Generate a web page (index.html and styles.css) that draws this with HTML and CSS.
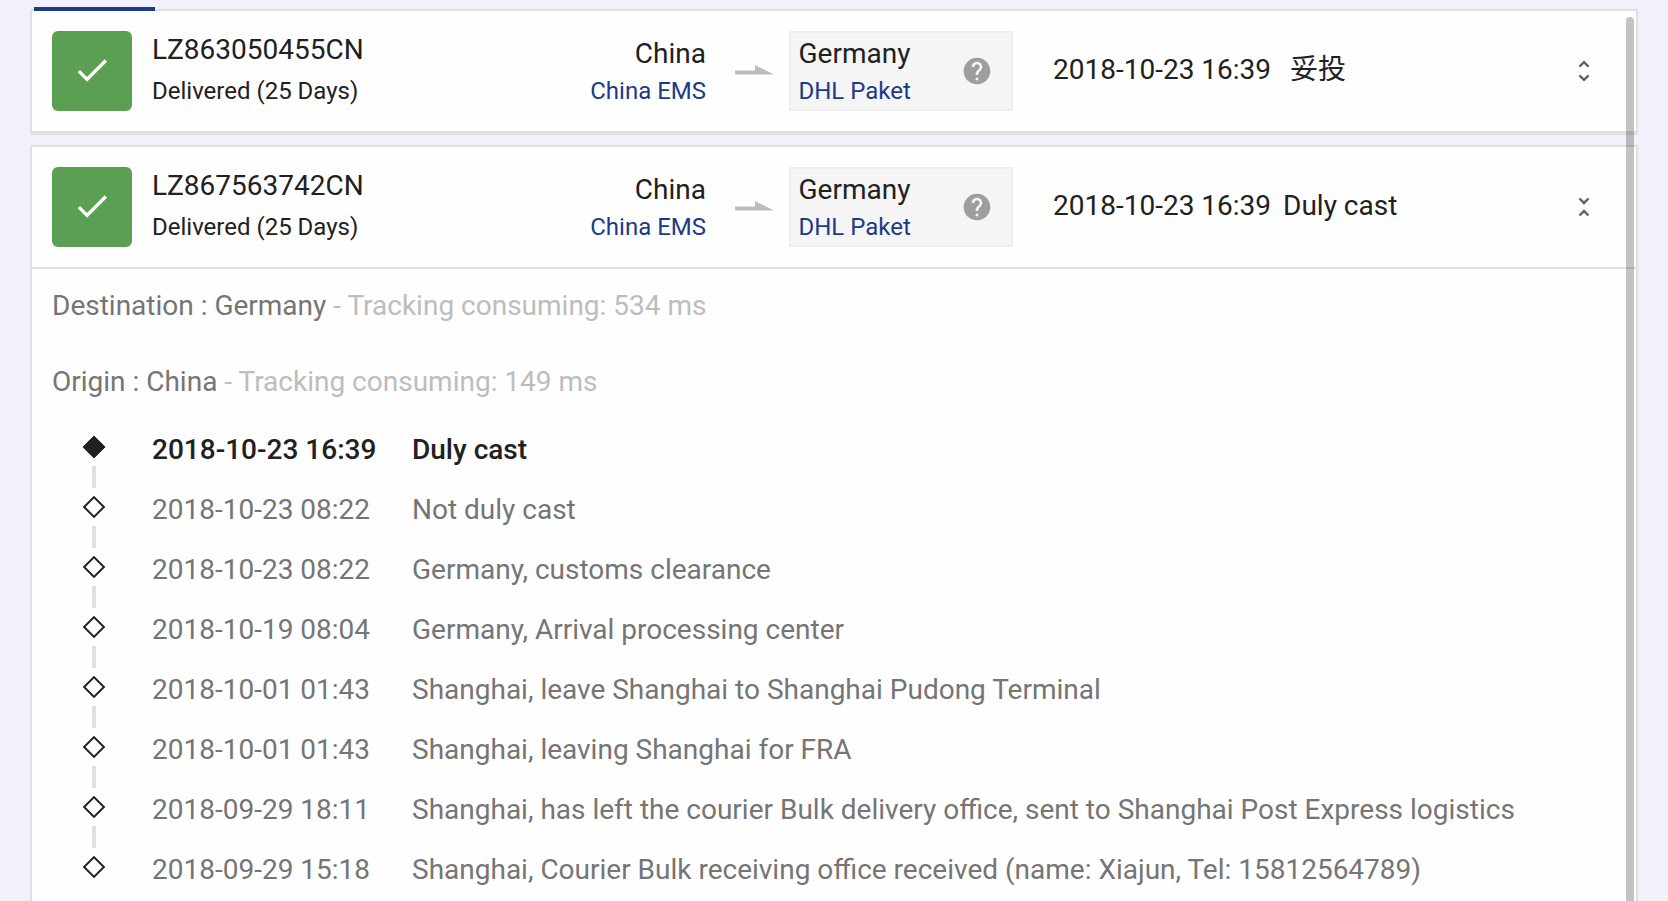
FILE: index.html
```html
<!DOCTYPE html>
<html lang="en">
<head>
	<meta charset="utf-8">
	<meta name="viewport" content="width=device-width, initial-scale=1">
	<title>Tracking results</title>
	<link rel="stylesheet" href="styles.css">
</head>
<body>
	<main class="results">
		<div class="tab_line"></div>
		<article class="card">
			<header class="card_head">
				<div class="status"><svg viewBox="0 0 24 24"><path d="M9 16.17L4.83 12l-1.42 1.41L9 19 21 7l-1.41-1.41z"/></svg></div>
				<div class="number">
					<p class="big">LZ863050455CN</p>
					<p class="small">Delivered (25 Days)</p>
				</div>
				<div class="from">
					<p class="big">China</p>
					<a class="small link">China EMS</a>
				</div>
				<svg class="arrow" viewBox="0 0 40 12"><path d="M0 5.5h20V0l19 9.5H0z"/></svg>
				<div class="to">
					<div>
						<p class="big">Germany</p>
						<a class="small link">DHL Paket</a>
					</div>
					<svg class="help" viewBox="0 0 24 24"><path d="M12 2C6.48 2 2 6.48 2 12s4.48 10 10 10 10-4.48 10-10S17.52 2 12 2zm1 17h-2v-2h2v2zm2.07-7.75l-.9.92C13.45 12.9 13 13.5 13 15h-2v-.5c0-1.1.45-2.1 1.17-2.83l1.24-1.26c.37-.36.59-.86.59-1.41 0-1.1-.9-2-2-2s-2 .9-2 2H8c0-2.21 1.79-4 4-4s4 1.79 4 4c0 .88-.36 1.68-.93 2.25z"/></svg>
				</div>
				<p class="latest"><time>2018-10-23 16:39</time><span class="zh" lang="zh">妥投</span></p>
				<svg class="fold" viewBox="0 0 24 24"><path d="M12 5.83L15.17 9l1.41-1.41L12 3 7.41 7.59 8.83 9 12 5.83zm0 12.34L8.83 15l-1.41 1.41L12 21l4.59-4.59L15.17 15 12 18.17z"/></svg>
			</header>
		</article>

		<article class="card open">
			<header class="card_head">
				<div class="status"><svg viewBox="0 0 24 24"><path d="M9 16.17L4.83 12l-1.42 1.41L9 19 21 7l-1.41-1.41z"/></svg></div>
				<div class="number">
					<p class="big">LZ867563742CN</p>
					<p class="small">Delivered (25 Days)</p>
				</div>
				<div class="from">
					<p class="big">China</p>
					<a class="small link">China EMS</a>
				</div>
				<svg class="arrow" viewBox="0 0 40 12"><path d="M0 5.5h20V0l19 9.5H0z"/></svg>
				<div class="to">
					<div>
						<p class="big">Germany</p>
						<a class="small link">DHL Paket</a>
					</div>
					<svg class="help" viewBox="0 0 24 24"><path d="M12 2C6.48 2 2 6.48 2 12s4.48 10 10 10 10-4.48 10-10S17.52 2 12 2zm1 17h-2v-2h2v2zm2.07-7.75l-.9.92C13.45 12.9 13 13.5 13 15h-2v-.5c0-1.1.45-2.1 1.17-2.83l1.24-1.26c.37-.36.59-.86.59-1.41 0-1.1-.9-2-2-2s-2 .9-2 2H8c0-2.21 1.79-4 4-4s4 1.79 4 4c0 .88-.36 1.68-.93 2.25z"/></svg>
				</div>
				<p class="latest"><time>2018-10-23 16:39</time><span>Duly cast</span></p>
				<svg class="fold" viewBox="0 0 24 24"><path d="M7.41 18.59L8.83 20 12 16.83 15.17 20l1.41-1.41L12 14l-4.59 4.59zm9.18-13.18L15.17 4 12 7.17 8.83 4 7.41 5.41 12 10l4.59-4.59z"/></svg>
			</header>
			<section class="detail">
				<h2 class="place">Destination : Germany <span class="ms">- Tracking consuming: 534 ms</span></h2>
				<h2 class="place">Origin : China <span class="ms">- Tracking consuming: 149 ms</span></h2>
				<ul class="events">
					<li class="event current"><i class="mark"></i><time>2018-10-23 16:39</time><p>Duly cast</p></li>
					<li class="event"><i class="mark"></i><time>2018-10-23 08:22</time><p>Not duly cast</p></li>
					<li class="event"><i class="mark"></i><time>2018-10-23 08:22</time><p>Germany, customs clearance</p></li>
					<li class="event"><i class="mark"></i><time>2018-10-19 08:04</time><p>Germany, Arrival processing center</p></li>
					<li class="event"><i class="mark"></i><time>2018-10-01 01:43</time><p>Shanghai, leave Shanghai to Shanghai Pudong Terminal</p></li>
					<li class="event"><i class="mark"></i><time>2018-10-01 01:43</time><p>Shanghai, leaving Shanghai for FRA</p></li>
					<li class="event"><i class="mark"></i><time>2018-09-29 18:11</time><p>Shanghai, has left the courier Bulk delivery office, sent to Shanghai Post Express logistics</p></li>
					<li class="event"><i class="mark"></i><time>2018-09-29 15:18</time><p>Shanghai, Courier Bulk receiving office received (name: Xiajun, Tel: 15812564789)</p></li>
				</ul>
			</section>
		</article>
		<div class="scrollbar"></div>
	</main>
</body>
</html>
```
FILE: styles.css
```css
* {
	box-sizing: border-box;
}

body {
	margin: 0;
	height: 901px;
	overflow: hidden;
	background: #f1f1fb;
	color: #212121;
	font-family: Roboto, "Noto Sans CJK SC", sans-serif;
	font-size: 28px;
}

p, h2, ul {
	margin: 0;
	padding: 0;
}

.results {
	position: relative;
	display: flex;
	flex-direction: column;
	gap: 10px;
	width: 1608px;
	height: 901px;
	margin-left: 30px;
	padding-top: 9px;
}

/* underline of the active tab, over the first card's edge */
.tab_line {
	position: absolute;
	top: 7px;
	left: 4px;
	width: 121px;
	height: 4px;
	background: #1c3a8a;
}

.card {
	flex: none;
	background: #fefefe;
	border: 2px solid #e0e0e0;
	border-bottom-width: 4px;
}

.card.open {
	height: 800px;
}

.card_head {
	display: flex;
	align-items: center;
	height: 120px;
	padding: 0 38px 0 20px;
}

.open .card_head {
	height: 122px;
	border-bottom: 2px solid #e0e0e0;
}

.status {
	display: flex;
	align-items: center;
	justify-content: center;
	width: 80px;
	height: 80px;
	border-radius: 6px;
	background: #5b9f52;
}

.status svg {
	width: 40px;
	height: 40px;
	margin-bottom: 2px;
	fill: #fff;
}

.big {
	line-height: 42px;
	margin-bottom: -2px;
}

.small {
	display: block;
	font-size: 24px;
	line-height: 36px;
}

.link {
	color: #1c3a8a;
}

.number {
	width: 300px;
	height: 80px;
	margin-left: 20px;
}

.number .big {
	line-height: 38px;
	margin-bottom: 4px;
}

.from {
	width: 254px;
	height: 76px;
	text-align: right;
}

.arrow {
	width: 40px;
	height: 12px;
	margin-left: 29px;
	fill: #bdbdbd;
}

.to {
	display: flex;
	align-items: center;
	justify-content: space-between;
	width: 224px;
	height: 80px;
	margin-left: 14px;
	padding: 0 18px 0 7.5px;
	border: 2px solid #eee;
	background: #f5f5f5;
}

.to > div {
	height: 76px;
}

.help {
	width: 32px;
	height: 32px;
	fill: #9e9e9e;
}

.latest {
	display: flex;
	gap: 12px;
	margin: -2px 0 0 40px;
	line-height: 40px;
}

.zh {
	margin-left: 7px;
}

.fold {
	width: 28px;
	height: 28px;
	margin: -1px 0 0 auto;
	fill: #616161;
}

.detail {
	color: #757575;
}

.place {
	height: 76px;
	padding-left: 20px;
	font-size: 28px;
	font-weight: 400;
	line-height: 74px;
}

.ms {
	color: #bdbdbd;
}

.events {
	list-style: none;
}

.event {
	position: relative;
	display: flex;
	align-items: center;
	height: 60px;
	padding: 0 0 4px 54px;
}

/* line between two marks */
.event:not(:last-child)::after {
	content: "";
	position: absolute;
	left: 60px;
	top: 45px;
	width: 4px;
	height: 22px;
	background: #e0e0e0;
}

.mark {
	width: 16px;
	height: 16px;
	margin: -4px 50px 0 0;
	border: 2px solid #212121;
	transform: rotate(45deg);
}

.current .mark {
	background: #212121;
}

.event time {
	width: 260px;
}

.current {
	color: #212121;
	font-weight: 500;
}

/* overlay scrollbar thumb */
.scrollbar {
	position: absolute;
	top: 17px;
	left: 1596px;
	width: 8px;
	height: 900px;
	border-radius: 4px;
	background: rgba(0, 0, 0, .23);
}
```
